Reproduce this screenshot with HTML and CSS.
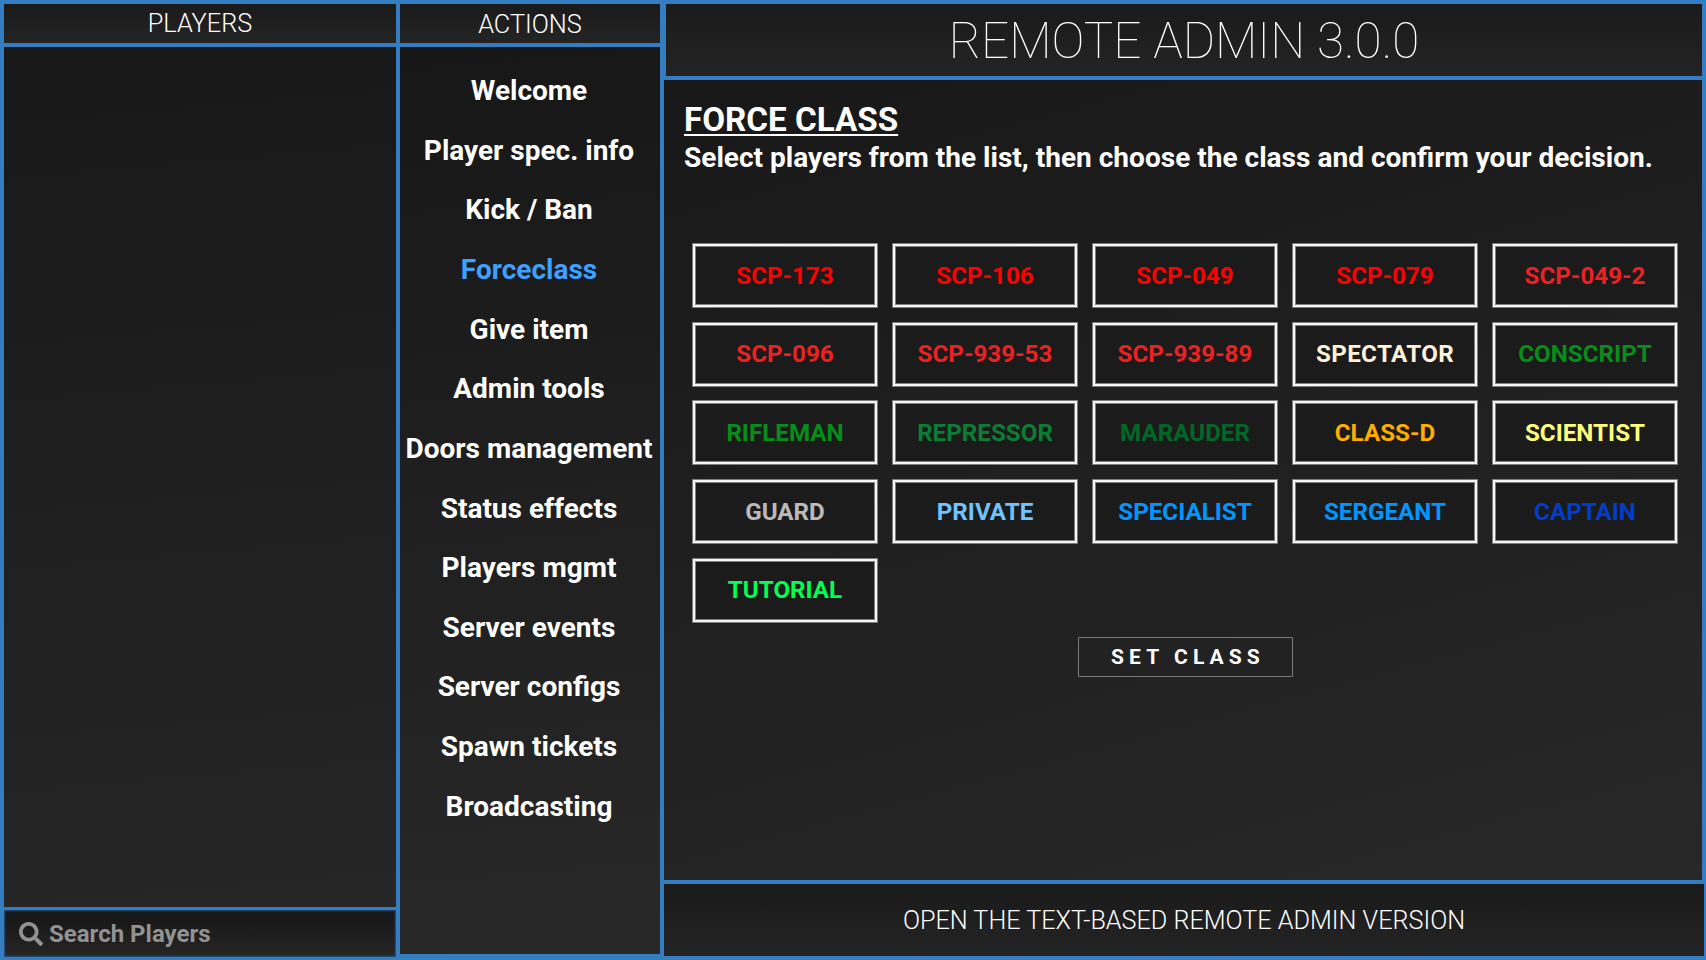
FILE: index.html
```html
<!DOCTYPE html>
<html lang="en">
<head>
<meta charset="utf-8">
<title>Remote Admin</title>
<link rel="stylesheet" href="styles.css">
</head>
<body>
<div class="app">
  <section class="players">
    <h2 class="column-title">PLAYERS</h2>
    <div class="player-list"></div>
    <label class="search">
      <svg class="search-icon" viewBox="0 0 512 512" aria-hidden="true"><path fill="currentColor" d="M505 442.700L405.300 343c-4.500-4.500-10.600-7-17-7H372c27.600-35.300 44-79.700 44-128C416 93.100 322.900 0 208 0S0 93.100 0 208s93.100 208 208 208c48.300 0 92.700-16.400 128-44v16.300c0 6.400 2.500 12.500 7 17l99.700 99.700c9.400 9.400 24.600 9.400 33.900 0l28.300-28.300c9.400-9.400 9.400-24.600.1-34zM208 336c-70.700 0-128-57.200-128-128 0-70.700 57.200-128 128-128 70.700 0 128 57.200 128 128 0 70.700-57.200 128-128 128z"/></svg>
      <span>Search Players</span>
    </label>
  </section>

  <section class="actions">
    <h2 class="column-title">ACTIONS</h2>
    <nav class="menu">
      <a class="menu-item">Welcome</a>
      <a class="menu-item">Player spec. info</a>
      <a class="menu-item">Kick / Ban</a>
      <a class="menu-item active">Forceclass</a>
      <a class="menu-item">Give item</a>
      <a class="menu-item">Admin tools</a>
      <a class="menu-item">Doors management</a>
      <a class="menu-item">Status effects</a>
      <a class="menu-item">Players mgmt</a>
      <a class="menu-item">Server events</a>
      <a class="menu-item">Server configs</a>
      <a class="menu-item">Spawn tickets</a>
      <a class="menu-item">Broadcasting</a>
    </nav>
  </section>

  <main class="main">
    <h1 class="title">REMOTE ADMIN 3.0.0</h1>
    <div class="content">
      <h3 class="heading">FORCE CLASS</h3>
      <p class="hint">Select players from the list, then choose the class and confirm your decision.</p>
      <div class="classes">
        <button class="class scp">SCP-173</button>
        <button class="class scp">SCP-106</button>
        <button class="class scp">SCP-049</button>
        <button class="class scp">SCP-079</button>
        <button class="class scp-alt first-row">SCP-049-2</button>
        <button class="class scp-alt">SCP-096</button>
        <button class="class scp-alt">SCP-939-53</button>
        <button class="class scp-alt">SCP-939-89</button>
        <button class="class spectator">SPECTATOR</button>
        <button class="class chaos">CONSCRIPT</button>
        <button class="class chaos">RIFLEMAN</button>
        <button class="class repressor">REPRESSOR</button>
        <button class="class marauder">MARAUDER</button>
        <button class="class class-d">CLASS-D</button>
        <button class="class scientist">SCIENTIST</button>
        <button class="class guard">GUARD</button>
        <button class="class private">PRIVATE</button>
        <button class="class ntf">SPECIALIST</button>
        <button class="class ntf">SERGEANT</button>
        <button class="class captain">CAPTAIN</button>
        <button class="class tutorial">TUTORIAL</button>
      </div>
      <button class="submit">SET CLASS</button>
    </div>
    <footer class="footer">OPEN THE TEXT-BASED REMOTE ADMIN VERSION</footer>
  </main>
</div>
</body>
</html>
```

FILE: styles.css
```css
* {
  box-sizing: border-box;
}

body {
  margin: 0;
  font-family: Roboto, "Liberation Sans", sans-serif;
  color: #fff;
}

h1, h2, h3, p {
  margin: 0;
}

button {
  font-family: inherit;
  padding: 0;
}

.app {
  display: grid;
  grid-template-columns: 392px 260px 1fr;
  column-gap: 4px;
  width: 1706px;
  height: 960px;
  padding: 4px 2px 4px 4px;
  background: #347dc1;
  overflow: hidden;
}

.column-title,
.title,
.footer {
  display: flex;
  align-items: center;
  justify-content: center;
  background: linear-gradient(#1a1a1a, #242424);
  white-space: nowrap;
}

.column-title {
  height: 39px;
  font-size: 25.3px;
  font-weight: 300;
}

.actions .column-title {
  padding-top: 2px;
}

.players {
  display: grid;
  grid-template-rows: 39px 860px 46px;
  align-content: start;
  row-gap: 4px;
}

.player-list {
  background: linear-gradient(175deg, #181818, #262626);
}

.search {
  display: flex;
  align-items: center;
  gap: 6px;
  margin-top: -1px;
  padding: 0 14px 0 15px;
  font-size: 24px;
  font-weight: 700;
  color: #929292;
  background: linear-gradient(#181818 20%, #262626);
  box-shadow: inset 0 0 2px 1px #245582;
}

.search-icon {
  width: 24px;
  height: 24px;
}

.actions {
  display: grid;
  grid-template-rows: 39px 907px;
  align-content: start;
  row-gap: 4px;
}

.menu {
  display: grid;
  grid-auto-rows: 59.67px;
  align-content: start;
  padding: 13.600px 2px 0 0;
  background: linear-gradient(175deg, #171717, #282828);
}

.menu-item {
  display: flex;
  align-items: center;
  justify-content: center;
  font-size: 28px;
  font-weight: 700;
  white-space: nowrap;
}

.menu-item.active {
  color: #40a0ff;
}

.main {
  display: grid;
  grid-template-rows: 72px 800px 72px;
  row-gap: 4px;
}

.title {
  margin: 0 2px;
  padding-top: 1px;
  font-size: 49.4px;
  font-weight: 100;
}

.content {
  display: flex;
  flex-direction: column;
  margin-right: 2px;
  padding: 20.600px 20px 0;
  background: linear-gradient(165deg, #181818, #282828);
}

.heading {
  font-size: 33.2px;
  line-height: 38px;
  text-decoration: underline;
  text-decoration-thickness: 2px;
  text-underline-offset: 3px;
  text-decoration-skip-ink: none;
}

.hint {
  font-size: 28.05px;
  font-weight: 700;
  line-height: 38px;
  white-space: nowrap;
}

.classes {
  display: grid;
  grid-template-columns: repeat(5, 186px);
  grid-auto-rows: 65px;
  gap: 13.75px 14px;
  margin: 66.400px 0 0 8px;
}

.class {
  border: 1px solid #7c7c7c;
  background: #1b1b1b;
  box-shadow: inset 0 0 0 2px #f5f5f5, inset 0 0 0 3px #808080;
  font-size: 24.2px;
  font-weight: 700;
}

.scp,
.first-row {
  padding-top: 1px;
}

.scp { color: #ff0000; }
.scp-alt { color: #ec2121; }
.spectator { color: #fff2d9; letter-spacing: 0.35px; }
.chaos { color: #068e1a; }
.repressor { color: #0d7d35; }
.marauder { color: #006826; }
.class-d { color: #ffae00; }
.scientist { color: #ffff7c; }
.guard { color: #bababa; }
.private { color: #70c3ff; }
.ntf { color: #0096ff; }
.captain { color: #003dca; }
.tutorial { color: #00ff51; }

.submit {
  align-self: center;
  width: 215px;
  height: 40px;
  margin: 14px 0 0 5px;
  padding-left: 5px;
  border: 1px solid #7a7a7a;
  border-radius: 1px;
  background: #222;
  color: #fff;
  font-size: 21px;
  font-weight: 700;
  letter-spacing: 5.100px;
}

.footer {
  padding-top: 1px;
  font-size: 25.2px;
  font-weight: 300;
}
```
